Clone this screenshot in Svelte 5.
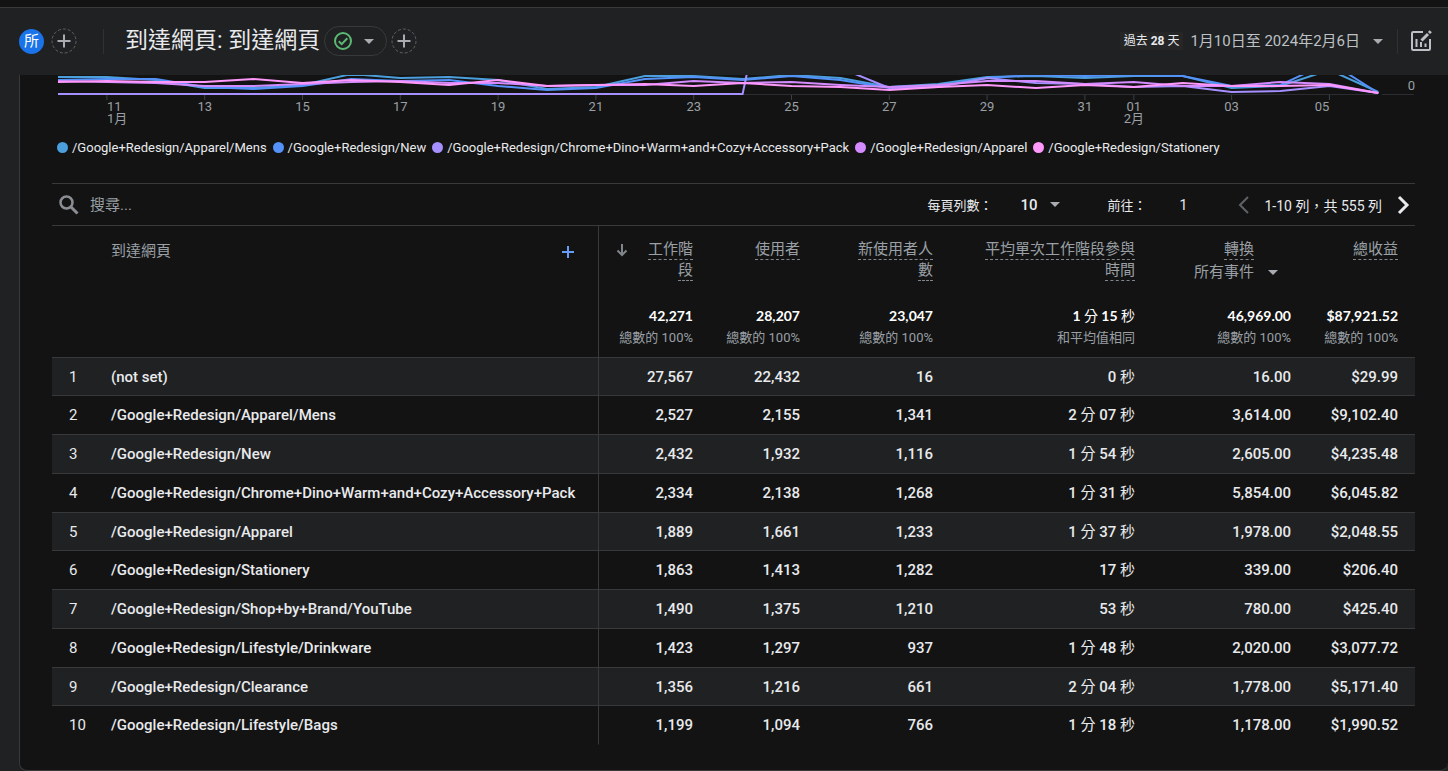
<script>
	const series = [
		{
			name: '/Google+Redesign/Apparel/Mens',
			color: '#4a9fdc',
			values: [77, 77, 80, 88, 88, 85, 74, 78, 77, 80, 89, 87, 76, 76, 79, 75, 78, 87, 84, 77, 76, 78, 76, 76, 88, 86, 70, 92]
		},
		{
			name: '/Google+Redesign/New',
			color: '#5491f9',
			values: [80, 79, 79, 87, 89, 86, 79, 81, 80, 86, 90, 88, 79, 77, 80, 76, 80, 88, 86, 78, 75, 76, 75, 76, 86, 85, 62, 93]
		},
		{
			name: '/Google+Redesign/Chrome+Dino+Warm+and+Cozy+Accessory+Pack',
			color: '#a68fff',
			values: [94, 94, 94, 94, 94, 94, 94, 94, 94, 94, 94, 94, 94, 94, 94, -138, 68, 88, 87, 78, 83, 84, 87, 86, 92, 91, 86, 93]
		},
		{
			name: '/Google+Redesign/Apparel',
			color: '#d48bff',
			values: [81, 82, 83, 86, 86, 84, 82, 81, 83, 83, 86, 85, 85, 81, 83, 82, 85, 87, 85, 81, 81, 84, 82, 86, 86, 82, 84, 93]
		},
		{
			name: '/Google+Redesign/Stationery',
			color: '#ff98fb',
			values: [82, 81, 82, 82, 79, 83, 80, 82, 85, 80, 86, 85, 84, 86, 83, 86, 87, 90, 87, 85, 88, 85, 87, 83, 86, 86, 85, 93]
		}
	];

	const ticks = [
		{ day: 1, label: '11', month: '1月', anchor: 'start' },
		{ day: 3, label: '13' },
		{ day: 5, label: '15' },
		{ day: 7, label: '17' },
		{ day: 9, label: '19' },
		{ day: 11, label: '21' },
		{ day: 13, label: '23' },
		{ day: 15, label: '25' },
		{ day: 17, label: '27' },
		{ day: 19, label: '29' },
		{ day: 21, label: '31' },
		{ day: 22, label: '01', month: '2月' },
		{ day: 24, label: '03' },
		{ day: 26, label: '05', anchor: 'end' }
	];

	const totals = [
		['42,271', '總數的 100%'],
		['28,207', '總數的 100%'],
		['23,047', '總數的 100%'],
		['1 分 15 秒', '和平均值相同'],
		['46,969.00', '總數的 100%'],
		['$87,921.52', '總數的 100%']
	];

	const rows = [
		['(not set)', '27,567', '22,432', '16', '0 秒', '16.00', '$29.99'],
		['/Google+Redesign/Apparel/Mens', '2,527', '2,155', '1,341', '2 分 07 秒', '3,614.00', '$9,102.40'],
		['/Google+Redesign/New', '2,432', '1,932', '1,116', '1 分 54 秒', '2,605.00', '$4,235.48'],
		['/Google+Redesign/Chrome+Dino+Warm+and+Cozy+Accessory+Pack', '2,334', '2,138', '1,268', '1 分 31 秒', '5,854.00', '$6,045.82'],
		['/Google+Redesign/Apparel', '1,889', '1,661', '1,233', '1 分 37 秒', '1,978.00', '$2,048.55'],
		['/Google+Redesign/Stationery', '1,863', '1,413', '1,282', '17 秒', '339.00', '$206.40'],
		['/Google+Redesign/Shop+by+Brand/YouTube', '1,490', '1,375', '1,210', '53 秒', '780.00', '$425.40'],
		['/Google+Redesign/Lifestyle/Drinkware', '1,423', '1,297', '937', '1 分 48 秒', '2,020.00', '$3,077.72'],
		['/Google+Redesign/Clearance', '1,356', '1,216', '661', '2 分 04 秒', '1,778.00', '$5,171.40'],
		['/Google+Redesign/Lifestyle/Bags', '1,199', '1,094', '766', '1 分 18 秒', '1,178.00', '$1,990.52']
	];

	// x of a day in chart units, the first day sits at 38
	const dayX = (day) => Math.round((38 + day * 48.9) * 10) / 10;
	const points = (values) => values.map((y, day) => `${dayX(day)},${y - 75}`).join(' ');
</script>

{#snippet caret()}
	<svg class="caret" width="10" height="5" viewBox="0 0 10 5" aria-hidden="true"><path d="M0 0h10L5 5z" /></svg>
{/snippet}

{#snippet addCircle()}
	<svg width="26" height="26" viewBox="0 0 26 26" aria-hidden="true">
		<circle cx="13" cy="13" r="12" fill="none" stroke="#5f6368" stroke-dasharray="3 2" />
		<path d="M13 6.5v13M6.5 13h13" stroke="#a9adb2" stroke-width="2" />
	</svg>
{/snippet}

<!-- the time units are set lighter than the digits -->
{#snippet amount(value)}
	{#each value.split(/([分秒])/) as part, i}{#if i % 2}<span class="unit">{part}</span>{:else}{part}{/if}{/each}
{/snippet}

<header>
	<button class="avatar">所</button>
	<button aria-label="新增比較項目">{@render addCircle()}</button>
	<span class="divider"></span>
	<h1>到達網頁: 到達網頁</h1>
	<button class="chip" aria-label="資料品質">
		<svg width="20" height="20" viewBox="0 0 20 20" fill="none" stroke="#5bb974" stroke-width="2" aria-hidden="true">
			<circle cx="10" cy="10" r="8" />
			<path d="M5.8 10.2l2.9 2.9 5.6-5.8" />
		</svg>
		{@render caret()}
	</button>
	<button aria-label="新增篩選器">{@render addCircle()}</button>

	<button class="range">
		<span class="preset">過去 <b>28</b> 天</span>
		<span class="dates">1月10日至 2024年2月6日</span>
		{@render caret()}
	</button>
	<span class="divider"></span>
	<button class="customize" aria-label="自訂報表">
		<svg width="22" height="22" viewBox="0 0 22 22" fill="none" stroke="#bdc1c6" stroke-width="2" aria-hidden="true">
			<path d="M13 2H3.2Q2 2 2 3.2V18.8Q2 20 3.2 20H18.8Q20 20 20 18.8V9" />
			<path d="M6.5 9v8M11 12v5M15.5 13.5v3.5" />
			<path d="M11.5 10.5L18 4" stroke-width="3" />
			<path d="M19 3l1.8-1.8" stroke-width="3" />
		</svg>
	</button>
</header>

<main>
	<svg class="chart" viewBox="0 0 1428 55" role="img" aria-label="各到達網頁的工作階段">
		<path d="M38 19.5H1358M1362 19.5H1394" stroke="#2c2d30" />
		{#each ticks as { day, label, month, anchor = 'middle' }}
			<path d="M{dayX(day)} 20v5" stroke="#3c4043" />
			<text x={dayX(day)} y="36" text-anchor={anchor}>{label}</text>
			{#if month}
				<text x={dayX(day)} y="48" text-anchor={anchor}>{month}</text>
			{/if}
		{/each}
		<text x="1395" y="15" text-anchor="end">0</text>
		{#each series as { color, values }}
			<polyline points={points(values)} stroke={color} />
		{/each}
	</svg>

	<ul class="legend">
		{#each series as { name, color }}
			<li><i style:background={color}></i>{name}</li>
		{/each}
	</ul>

	<div class="toolbar">
		<label class="search">
			<svg width="20" height="20" viewBox="0 0 20 20" fill="none" stroke="#8a8e93" aria-hidden="true">
				<circle cx="7.5" cy="7.5" r="6" stroke-width="2.5" />
				<path d="M12 12l6.5 6.5" stroke-width="3" />
			</svg>
			<input type="text" placeholder="搜尋..." aria-label="搜尋" />
		</label>

		<label for="page-size">每頁列數：</label>
		<span class="select size">
			<select id="page-size"><option>10</option></select>
			{@render caret()}
		</span>
		<label for="page">前往：</label>
		<input id="page" class="page" type="text" value="1" />
		<button class="step" aria-label="上一頁" disabled>
			<svg width="24" height="24" viewBox="0 0 24 24" fill="none" stroke="currentColor" stroke-width="2" aria-hidden="true"><path d="M16 4l-8 8 8 8" /></svg>
		</button>
		<span class="count">1-10 列，共 555 列</span>
		<button class="step" aria-label="下一頁">
			<svg width="24" height="24" viewBox="0 0 24 24" fill="none" stroke="currentColor" stroke-width="3" aria-hidden="true"><path d="M8 4l8 8-8 8" /></svg>
		</button>
	</div>

	<table>
		<colgroup>
			<col class="c-index" />
			<col />
			<col class="c-sessions" />
			<col class="c-users" />
			<col class="c-new" />
			<col class="c-time" />
			<col class="c-events" />
			<col class="c-revenue" />
		</colgroup>
		<thead>
			<tr class="heads">
				<th></th>
				<th class="name">
					<div class="dimension">
						到達網頁
						<button aria-label="新增維度">
							<svg width="14" height="14" viewBox="0 0 14 14" aria-hidden="true"><path d="M7 1v12M1 7h12" stroke="#669df6" stroke-width="2" /></svg>
						</button>
					</div>
				</th>
				<th class="sorted">
					<div>
						<svg width="14" height="21" viewBox="0 0 14 21" fill="none" stroke="#80868b" stroke-width="2" aria-hidden="true"><path d="M7 5v11M2.5 11.5L7 16l4.5-4.5" /></svg>
						<p><span>工作階段</span></p>
					</div>
				</th>
				<th><span>使用者</span></th>
				<th><span>新使用者人數</span></th>
				<th><span>平均單次工作階段參與時間</span></th>
				<th class="events">
					<p><span>轉換</span></p>
					<div class="select">
						<select aria-label="事件"><option>所有事件</option></select>
						{@render caret()}
					</div>
				</th>
				<th><span>總收益</span></th>
			</tr>
			<tr class="totals">
				<td></td>
				<td class="name"></td>
				{#each totals as [value, note]}
					<td><b>{@render amount(value)}</b><small>{note}</small></td>
				{/each}
			</tr>
		</thead>
		<tbody>
			{#each rows as [name, ...values], i}
				<tr>
					<td class="index">{i + 1}</td>
					<td class="name">{name}</td>
					{#each values as value}
						<td>{@render amount(value)}</td>
					{/each}
				</tr>
			{/each}
		</tbody>
	</table>
</main>

<style>
	:global(body) {
		margin: 0;
		background: #202122;
		color: #e8eaed;
		font-family: Roboto, "Noto Sans CJK TC", sans-serif;
		font-size: 15px;
	}

	* {
		box-sizing: border-box;
	}

	button,
	input,
	select {
		margin: 0;
		padding: 0;
		border: 0;
		background: none;
		color: inherit;
		font: inherit;
	}

	button {
		cursor: pointer;
	}

	svg {
		display: block;
	}

	h1,
	p {
		margin: 0;
	}

	.caret {
		fill: #a9adb2;
	}

	header {
		display: flex;
		align-items: center;
		height: 75px;
		padding: 0 16px 0 19px;
		border-top: 7px solid #131313;
		box-shadow: inset 0 1px #38393b;
	}

	.avatar {
		width: 25px;
		height: 25px;
		margin-right: 7px;
		border-radius: 50%;
		background: #1a73e8;
		color: #fff;
		font-size: 15px;
		line-height: 25px;
	}

	.divider {
		width: 1px;
		height: 25px;
		margin-left: 26px;
		background: #303134;
	}

	h1 {
		margin-left: 21px;
		font-size: 23px;
		line-height: 32px;
		font-weight: 400;
		white-space: nowrap;
	}

	.chip {
		display: flex;
		align-items: center;
		justify-content: space-between;
		width: 63px;
		height: 30px;
		margin: 0 4px;
		padding: 0 12px 0 8px;
		border: 1px solid #38393b;
		border-radius: 15px;
	}

	.range {
		display: flex;
		align-items: center;
		margin-left: auto;
		white-space: nowrap;
	}

	.preset {
		padding: 0 4px;
		background: #262626;
		font-size: 12px;
		line-height: 18px;
	}

	.dates {
		margin: 0 13px 0 7px;
		color: #bdc1c6;
		font-size: 15px;
		line-height: 20px;
	}

	.range + .divider {
		margin: 0 12px 0 14px;
	}

	main {
		margin-left: 19px;
		padding-bottom: 25px;
		border: 1px solid #38393b;
		border-width: 0 0 1px 1px;
		border-radius: 0 0 8px 8px;
		background: #131313;
	}

	.chart {
		width: 100%;
		overflow: hidden;
	}

	.chart text {
		fill: #9aa0a6;
		font-size: 13px;
	}

	.chart polyline {
		fill: none;
		stroke-width: 2;
	}

	.legend {
		display: flex;
		gap: 6px;
		margin: 7px 0 25px;
		padding: 0 37px;
		list-style: none;
		font-size: 13px;
		line-height: 21px;
		white-space: nowrap;
	}

	.legend li {
		display: flex;
		align-items: center;
		gap: 4px;
	}

	.legend i {
		width: 11px;
		height: 11px;
		border-radius: 50%;
	}

	.toolbar {
		display: flex;
		align-items: center;
		height: 43px;
		margin: 0 33px 0 32px;
		border: 1px solid #38393b;
		border-width: 1px 0;
		font-size: 13px;
		white-space: nowrap;
	}

	.search {
		display: flex;
		flex: 1;
		align-items: center;
		gap: 11px;
		padding-left: 7px;
		font-size: 15px;
	}

	.search input {
		flex: 1;
		outline: 0;
	}

	.search input::placeholder {
		color: #9aa0a6;
		opacity: 1;
	}

	.select {
		display: inline-flex;
		align-items: center;
		position: relative;
	}

	.select select {
		padding-right: 36px;
		appearance: none;
		outline: 0;
	}

	.select .caret {
		position: absolute;
		right: 13px;
		pointer-events: none;
	}

	.size {
		margin: 0 34px 0 28px;
		font-size: 15px;
		font-weight: 500;
	}

	.size select {
		width: 53px;
		padding-right: 32px;
	}

	.page {
		width: 48px;
		margin: 0 24px 0 13px;
		font-size: 14px;
		text-align: center;
	}

	.step:disabled {
		color: #5f6368;
	}

	.count {
		margin: 0 9px;
		font-size: 14px;
	}

	table {
		width: calc(100% - 65px);
		margin: 0 33px 0 32px;
		border-spacing: 0;
		table-layout: fixed;
	}

	.c-index {
		width: 59px;
	}

	.c-sessions {
		width: 111px;
	}

	.c-users,
	.c-revenue {
		width: 107px;
	}

	.c-new {
		width: 133px;
	}

	.c-time {
		width: 202px;
	}

	.c-events {
		width: 156px;
	}

	th,
	td {
		padding: 0 17px 0 0;
		text-align: right;
		font-weight: 500;
		white-space: nowrap;
	}

	th {
		padding: 13px 17px 0 30px;
		color: #9aa0a6;
		font-weight: 400;
		line-height: 21px;
		vertical-align: top;
		white-space: normal;
	}

	th span {
		padding-bottom: 1px;
		border-bottom: 1px dashed #80868b;
	}

	.name {
		padding-left: 0;
		border-right: 1px solid #38393b;
		text-align: left;
	}

	.unit {
		font-weight: 400;
	}

	.heads {
		height: 79px;
	}

	.dimension {
		display: flex;
		align-items: center;
		justify-content: space-between;
		padding: 2px 6px 0 0;
	}

	.dimension button {
		height: 18px;
	}

	.sorted {
		padding-left: 16px;
	}

	.sorted div {
		display: flex;
		align-items: flex-start;
		gap: 12px;
	}

	.sorted p {
		flex: 1;
	}

	.events p {
		padding-right: 37px;
	}

	.events .select {
		margin: 2px 0 0;
	}

	th.events {
		padding-left: 0;
	}

	.totals {
		height: 53px;
	}

	.totals td {
		border-bottom: 1px solid #38393b;
		vertical-align: top;
	}

	.totals b,
	.totals small {
		display: block;
		line-height: 22px;
	}

	.totals b {
		color: #fff;
		font-family: Lato, "Noto Sans CJK TC", sans-serif;
		font-size: 14px;
	}

	.totals small {
		color: #9aa0a6;
		font-size: 13px;
		font-weight: 400;
	}

	tbody tr {
		height: 39px;
	}

	/* keeps ten rows just under 39px each */
	tbody tr:nth-child(4n + 1) {
		height: 38px;
	}

	tbody tr:nth-child(odd) {
		background: #202122;
	}

	tbody td {
		border-bottom: 1px solid #38393b;
		line-height: 20px;
	}

	tbody tr:last-child td {
		border-bottom-color: transparent;
	}

	tbody .index {
		padding-left: 17px;
		font-weight: 400;
		text-align: left;
	}
</style>
